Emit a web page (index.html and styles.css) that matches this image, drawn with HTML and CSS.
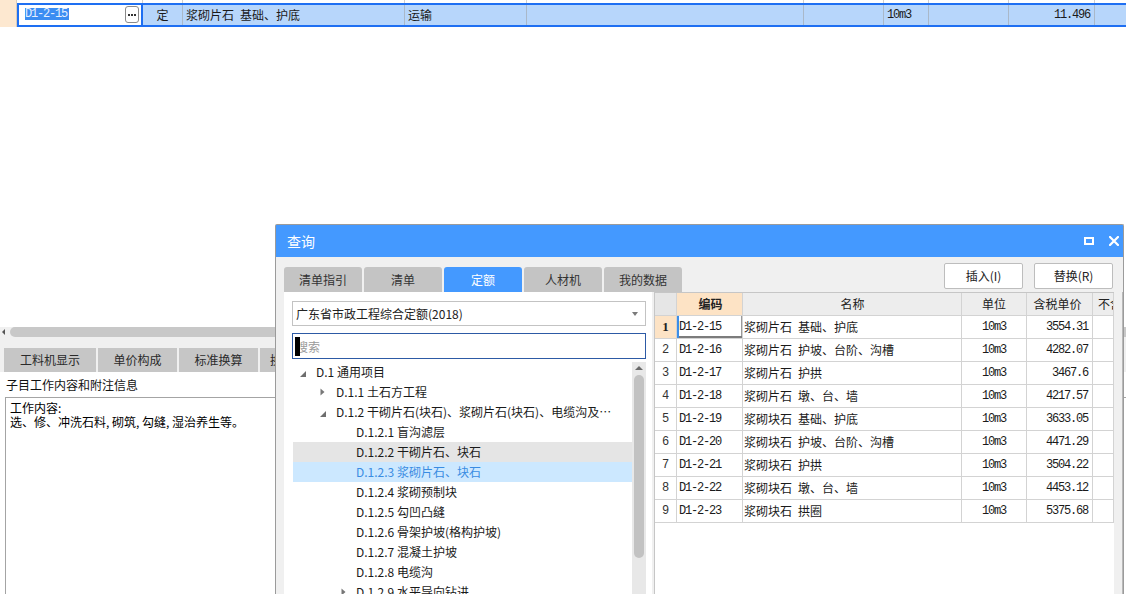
FILE: index.html
```html
<!DOCTYPE html>
<html lang="zh-CN">
<head>
<meta charset="utf-8">
<title>查询</title>
<link rel="stylesheet" href="styles.css">
</head>
<body>
<div class="app">
  <div class="sheet">
    <div class="prev-row">
      <div class="cell w-rh"></div>
      <div class="cell w-code"></div>
      <div class="cell w-type"></div>
      <div class="cell w-name"></div>
      <div class="cell w-work"></div>
      <div class="cell w-b1"></div>
      <div class="cell w-b2"></div>
      <div class="cell w-unit"></div>
      <div class="cell w-b3"></div>
      <div class="cell w-qty"></div>
      <div class="cell w-b4"></div>
    </div>
    <div class="cur-row">
      <div class="cell w-rh"></div>
      <div class="edit-cell">
        <span class="sel mono">D1-2-15</span>
        <span class="dots-btn"><i></i><i></i><i></i></span>
      </div>
      <div class="row-body">
        <div class="cell w-type center">定</div>
        <div class="cell w-name pad">浆砌片石&ensp;基础、护底</div>
        <div class="cell w-work pad">运输</div>
        <div class="cell w-b1"></div>
        <div class="cell w-b2"></div>
        <div class="cell w-unit pad mono">10m3</div>
        <div class="cell w-b3"></div>
        <div class="cell w-qty right mono">11.496</div>
        <div class="cell w-b4"></div>
      </div>
    </div>
  </div>

  <div class="hscroll">
    <span class="harrow"></span>
    <span class="hthumb"></span>
  </div>

  <div class="bottom">
    <div class="btabs">
      <div class="btab bt1">工料机显示</div>
      <div class="btab bt2">单价构成</div>
      <div class="btab bt2">标准换算</div>
      <div class="btab bt2 bt4">换算信息</div>
    </div>
    <div class="binfo-title">子目工作内容和附注信息</div>
    <div class="binfo"><div class="bline">工作内容:</div><div class="bline">选、修、冲洗石料, 砌筑, 勾缝, 湿治养生等。</div></div>
  </div>

  <div class="dialog">
    <div class="dlg-title">
      <span class="dlg-name">查询</span>
      <span class="dlg-icons">
        <span class="ic-max"></span>
        <svg class="ic-close" width="10" height="10" viewBox="0 0 10 10"><path d="M1 1 L9 9 M9 1 L1 9" stroke="#fff" stroke-width="2.2" stroke-linecap="square"/></svg>
      </span>
    </div>
    <div class="dlg-bar">
      <div class="dtabs">
        <div class="dtab">清单指引</div>
        <div class="dtab">清单</div>
        <div class="dtab active">定额</div>
        <div class="dtab">人材机</div>
        <div class="dtab">我的数据</div>
      </div>
      <div class="dbtns">
        <div class="dbtn">插入(I)</div>
        <div class="dbtn">替换(R)</div>
      </div>
    </div>
    <div class="dlg-main">
      <div class="lpane">
        <div class="combo">
          <span>广东省市政工程综合定额(2018)</span>
          <span class="caret"></span>
        </div>
        <div class="search"><span class="cursor"></span><span class="ph">搜索</span></div>
        <div class="tree">
          <div class="tree-list">
            <div class="trow l0"><span class="tog"><svg width="6" height="6" viewBox="0 0 6 6"><polygon points="6,0 6,6 0,6" fill="#6e6e6e"/></svg></span><span class="tl">D.1 通用项目</span></div>
            <div class="trow l1"><span class="tog"><svg width="5" height="8" viewBox="0 0 5 8"><polygon points="0.5,0.5 4.5,4 0.5,7.5" fill="#777"/></svg></span><span class="tl">D.1.1 土石方工程</span></div>
            <div class="trow l1"><span class="tog"><svg width="6" height="6" viewBox="0 0 6 6"><polygon points="6,0 6,6 0,6" fill="#6e6e6e"/></svg></span><span class="tl">D.1.2 干砌片石(块石)、浆砌片石(块石)、电缆沟及水平导向钻进</span></div>
            <div class="trow l2"><span class="tog"></span><span class="tl">D.1.2.1 盲沟滤层</span></div>
            <div class="trow l2 hover"><span class="tog"></span><span class="tl">D.1.2.2 干砌片石、块石</span></div>
            <div class="trow l2 selected"><span class="tog"></span><span class="tl">D.1.2.3 浆砌片石、块石</span></div>
            <div class="trow l2"><span class="tog"></span><span class="tl">D.1.2.4 浆砌预制块</span></div>
            <div class="trow l2"><span class="tog"></span><span class="tl">D.1.2.5 勾凹凸缝</span></div>
            <div class="trow l2"><span class="tog"></span><span class="tl">D.1.2.6 骨架护坡(格构护坡)</span></div>
            <div class="trow l2"><span class="tog"></span><span class="tl">D.1.2.7 混凝土护坡</span></div>
            <div class="trow l2"><span class="tog"></span><span class="tl">D.1.2.8 电缆沟</span></div>
            <div class="trow l2"><span class="tog"><svg width="5" height="8" viewBox="0 0 5 8"><polygon points="0.5,0.5 4.5,4 0.5,7.5" fill="#777"/></svg></span><span class="tl">D.1.2.9 水平导向钻进</span></div>
          </div>
          <div class="vscroll">
            <span class="varrow"></span>
            <span class="vthumb"></span>
          </div>
        </div>
      </div>
      <div class="rpane">
        <div class="grid">
          <div class="grow ghead">
            <div class="gc c-no hn"></div>
            <div class="gc c-code hcode">编码</div>
            <div class="gc c-name center">名称</div>
            <div class="gc c-unit center">单位</div>
            <div class="gc c-price center">含税单价</div>
            <div class="gc c-x">不含税</div>
          </div>
          <div class="grow">
            <div class="gc c-no cur">1</div>
            <div class="gc c-code mono curcell">D1-2-15</div>
            <div class="gc c-name">浆砌片石&ensp;基础、护底</div>
            <div class="gc c-unit center mono">10m3</div>
            <div class="gc c-price right mono">3554.31</div>
            <div class="gc c-x"></div>
          </div>
          <div class="grow">
            <div class="gc c-no">2</div>
            <div class="gc c-code mono">D1-2-16</div>
            <div class="gc c-name">浆砌片石&ensp;护坡、台阶、沟槽</div>
            <div class="gc c-unit center mono">10m3</div>
            <div class="gc c-price right mono">4282.07</div>
            <div class="gc c-x"></div>
          </div>
          <div class="grow">
            <div class="gc c-no">3</div>
            <div class="gc c-code mono">D1-2-17</div>
            <div class="gc c-name">浆砌片石&ensp;护拱</div>
            <div class="gc c-unit center mono">10m3</div>
            <div class="gc c-price right mono">3467.6</div>
            <div class="gc c-x"></div>
          </div>
          <div class="grow">
            <div class="gc c-no">4</div>
            <div class="gc c-code mono">D1-2-18</div>
            <div class="gc c-name">浆砌片石&ensp;墩、台、墙</div>
            <div class="gc c-unit center mono">10m3</div>
            <div class="gc c-price right mono">4217.57</div>
            <div class="gc c-x"></div>
          </div>
          <div class="grow">
            <div class="gc c-no">5</div>
            <div class="gc c-code mono">D1-2-19</div>
            <div class="gc c-name">浆砌块石&ensp;基础、护底</div>
            <div class="gc c-unit center mono">10m3</div>
            <div class="gc c-price right mono">3633.05</div>
            <div class="gc c-x"></div>
          </div>
          <div class="grow">
            <div class="gc c-no">6</div>
            <div class="gc c-code mono">D1-2-20</div>
            <div class="gc c-name">浆砌块石&ensp;护坡、台阶、沟槽</div>
            <div class="gc c-unit center mono">10m3</div>
            <div class="gc c-price right mono">4471.29</div>
            <div class="gc c-x"></div>
          </div>
          <div class="grow">
            <div class="gc c-no">7</div>
            <div class="gc c-code mono">D1-2-21</div>
            <div class="gc c-name">浆砌块石&ensp;护拱</div>
            <div class="gc c-unit center mono">10m3</div>
            <div class="gc c-price right mono">3504.22</div>
            <div class="gc c-x"></div>
          </div>
          <div class="grow">
            <div class="gc c-no">8</div>
            <div class="gc c-code mono">D1-2-22</div>
            <div class="gc c-name">浆砌块石&ensp;墩、台、墙</div>
            <div class="gc c-unit center mono">10m3</div>
            <div class="gc c-price right mono">4453.12</div>
            <div class="gc c-x"></div>
          </div>
          <div class="grow">
            <div class="gc c-no">9</div>
            <div class="gc c-code mono">D1-2-23</div>
            <div class="gc c-name">浆砌块石&ensp;拱圈</div>
            <div class="gc c-unit center mono">10m3</div>
            <div class="gc c-price right mono">5375.68</div>
            <div class="gc c-x"></div>
          </div>
        </div>
        <div class="rstrip"></div>
      </div>
    </div>
  </div>
</div>
</body>
</html>
```

FILE: styles.css
```css
* { box-sizing: border-box; }
html, body { margin: 0; padding: 0; }
body {
  width: 1126px;
  height: 594px;
  overflow: hidden;
  background: #fff;
  font-family: "Noto Sans CJK SC", "Liberation Sans", sans-serif;
  font-size: 12px;
  color: #1a1a1a;
}
.app { position: relative; width: 1126px; height: 594px; overflow: hidden; }
.mono { font-family: "Liberation Mono", "Noto Sans CJK SC", monospace; font-size: 12px; letter-spacing: -1.2px; }
.center { text-align: center; }
.right { text-align: right; }

/* ---------- underlying sheet ---------- */
.sheet { height: 327px; }
.prev-row, .cur-row, .row-body { display: flex; }
.prev-row { height: 3px; }
.cur-row { height: 24px; }
.cell { flex: none; border-right: 1px solid #cfcfcf; white-space: nowrap; overflow: hidden; }
.w-rh { width: 17px; background: #fde8d0; border-right-color: #d9cbbb; }
.w-code { width: 126px; }
.w-type { width: 40px; }
.w-name { width: 222px; }
.w-work { width: 122px; }
.w-b1 { width: 277px; }
.w-b2 { width: 80px; }
.w-unit { width: 45px; }
.w-b3 { width: 80px; }
.w-qty { width: 86px; }
.w-b4 { flex: 1; border-right: none; }

.edit-cell {
  flex: none;
  width: 126px;
  height: 24px;
  background: #fff;
  border: 2px solid #1e6ff2;
  display: flex;
  justify-content: space-between;
  align-items: flex-start;
  padding: 1px 2px 0 6px;
}
.sel {
  margin-top: 2px;
  background: #3b8df2;
  color: #e6f0ff;
  line-height: 12px;
  height: 12px;
  padding: 0 2px 0 0;
}
.dots-btn {
  width: 14px;
  height: 17px;
  border: 1px solid #8a8a8a;
  border-radius: 3px;
  background: #fff;
  display: flex;
  align-items: center;
  justify-content: center;
  gap: 1px;
}
.dots-btn i { width: 2px; height: 2px; background: #333; display: block; }

.row-body {
  flex: 1;
  height: 24px;
  background: #b7d6fb;
  border-top: 2px solid #1e6ff2;
  border-bottom: 2px solid #1e6ff2;
}
.row-body .cell { height: 20px; line-height: 20px; border-right-color: #a9b8c9; color: #1a1a1a; }
.row-body .pad { padding-left: 3px; }
.row-body .w-qty { padding-right: 4px; }

/* ---------- horizontal scrollbar ---------- */
.hscroll {
  height: 10px;
  background: #f0f0f0;
  display: flex;
  align-items: center;
}
.harrow {
  width: 0; height: 0;
  margin-left: 2px;
  border-top: 3px solid transparent;
  border-bottom: 3px solid transparent;
  border-right: 3px solid #555;
}
.hthumb {
  margin-left: 5px;
  flex: 1;
  height: 10px;
  background: #c8c8c8;
  border-radius: 5px 0 0 5px;
}

/* ---------- bottom panel ---------- */
.btabs {
  height: 35px;
  background: #f0f0f0;
  padding: 11px 0 0 4px;
  display: flex;
  gap: 2px;
}
.btab {
  height: 24px;
  line-height: 24px;
  background: #c6c6c6;
  text-align: center;
  color: #2a2a2a;
  font-size: 12px;
  white-space: nowrap;
  overflow: hidden;
}
.bt1 { width: 92px; }
.bt2 { width: 79px; }
.bt4 { text-align: left; padding-left: 10px; }
.binfo-title {
  height: 25px;
  padding: 5px 0 0 6px;
  line-height: 16px;
  color: #111;
}
.binfo {
  margin-left: 5px;
  height: 220px;
  border: 1px solid #a4a4a4;
  border-right: none;
  padding: 3px 4px;
  color: #000;
}
.bline { height: 14px; line-height: 14px; white-space: nowrap; }

/* ---------- dialog ---------- */
.dialog {
  position: absolute;
  left: 275px;
  top: 224px;
  width: 849px;
  height: 372px;
  background: #f0f0f0;
  border: 1px solid #9b9b9b;
  border-bottom: none;
  border-radius: 2px 2px 0 0;
  display: flex;
  flex-direction: column;
}
.dlg-title {
  height: 32px;
  flex: none;
  background: #4499ff;
  color: #fff;
  display: flex;
  align-items: center;
  justify-content: space-between;
  padding: 0 4px 0 11px;
}
.dlg-name { font-size: 14px; line-height: 32px; }
.dlg-icons { display: flex; align-items: center; gap: 15px; }
.ic-max {
  width: 10px;
  height: 8px;
  border: 2px solid #fff;
  display: block;
}
.ic-close { display: block; }

.dlg-bar {
  height: 35px;
  flex: none;
  padding: 6px 10px 0 8px;
  display: flex;
  justify-content: space-between;
}
.dtabs { display: flex; gap: 2px; align-self: flex-end; }
.dtab {
  width: 78px;
  height: 25px;
  line-height: 25px;
  text-align: center;
  background: #c4c4c4;
  color: #333;
  border-radius: 3px 3px 0 0;
}
.dtab.active { background: #4499ff; color: #fff; }
.dbtns { display: flex; gap: 11px; align-self: flex-start; }
.dbtn {
  width: 79px;
  height: 26px;
  line-height: 24px;
  text-align: center;
  background: #fff;
  border: 1px solid #bdbdbd;
  border-radius: 2px;
  color: #222;
}

.dlg-main { flex: 1; display: flex; min-height: 0; padding-left: 8px; }
.lpane {
  width: 368px;
  flex: none;
  background: #fff;
  padding: 9px 6px 0 8px;
  display: flex;
  flex-direction: column;
  overflow: hidden;
}
.combo {
  height: 25px;
  border: 1px solid #c3c3c3;
  display: flex;
  align-items: center;
  justify-content: space-between;
  padding: 0 7px 0 3px;
  color: #222;
  flex: none;
}
.caret {
  width: 0; height: 0;
  border-left: 3px solid transparent;
  border-right: 3px solid transparent;
  border-top: 4px solid #7a7a7a;
}
.search {
  margin-top: 7px;
  height: 26px;
  border: 1px solid #2d5aa5;
  display: flex;
  align-items: center;
  padding-left: 2px;
  flex: none;
}
.cursor {
  position: relative;
  z-index: 1;
  width: 5px;
  height: 19px;
  background: #000;
  margin-right: -4px;
}
.ph { color: #9a9a9a; }

.tree { margin-top: 3px; margin-left: 1px; flex: 1; display: flex; min-height: 0; }
.tree-list { flex: 1; min-width: 0; }
.trow {
  height: 20px;
  display: flex;
  align-items: center;
  padding-right: 10px;
  color: #1a1a1a;
}
.trow.l0 { padding-left: 4px; }
.trow.l1 { padding-left: 24px; }
.trow.l2 { padding-left: 44px; }
.trow.hover { background: #e5e5e5; }
.trow.selected { background: #cce8ff; color: #3a8ce2; }
.tog {
  width: 19px;
  flex: none;
  height: 20px;
  display: flex;
  align-items: center;
  padding-left: 3px;
}
.l0 .tog svg, .l1 .tog svg[width="6"] { margin-top: 4px; }
.l2 .tog { padding-left: 4px; }
.tl { white-space: nowrap; overflow: hidden; text-overflow: ellipsis; line-height: 20px; }

.vscroll {
  width: 14px;
  flex: none;
  background: #e8e8e8;
  display: flex;
  flex-direction: column;
  align-items: center;
}
.varrow {
  margin-top: 4px;
  width: 0; height: 0;
  border-left: 4px solid transparent;
  border-right: 4px solid transparent;
  border-bottom: 4px solid #6a6a6a;
}
.vthumb {
  margin-top: 5px;
  width: 10px;
  height: 183px;
  background: #c2c2c2;
  border-radius: 5px;
}

.rpane {
  flex: 1;
  display: flex;
  margin-left: 2px;
  background: #f0f0f0;
}
.grid {
  width: 460px;
  flex: none;
  background: #fff;
  border-left: 1px solid #c6c6c6;
  border-top: 1px solid #c6c6c6;
}
.rstrip { flex: 1; border-right: 1px solid #b9b9b9; }
.grow {
  display: grid;
  grid-template-columns: 22px 66px 219px 65px 66px 21px;
  height: 23px;
}
.gc {
  border-right: 1px solid #d3d3d3;
  border-bottom: 1px solid #d3d3d3;
  line-height: 22px;
  white-space: nowrap;
  overflow: hidden;
  color: #1a1a1a;
}
.grow .c-no { text-align: center; font-family: "Liberation Mono", monospace; font-size: 12px; color: #333; }
.grow .c-code { padding-left: 2px; }
.grow .c-name { padding-left: 1px; }
.grow .c-price { padding-right: 4px; }
.ghead .gc { background: #ededed; color: #222; }
.ghead .hn { background: #e6e6e6; }
.ghead .hcode { background: #fde3c5; text-align: center; font-weight: bold; }
.ghead .c-x { padding-left: 5px; }
.grow .c-no.cur { background: #fde3c5; font-weight: bold; color: #222; font-family: "Liberation Serif", serif; font-size: 13px; }
.curcell { box-shadow: inset 2px 0 #3d8ee8, inset 0 -2px #7c7c7c, inset -1px 0 #9a9a9a; }
```
